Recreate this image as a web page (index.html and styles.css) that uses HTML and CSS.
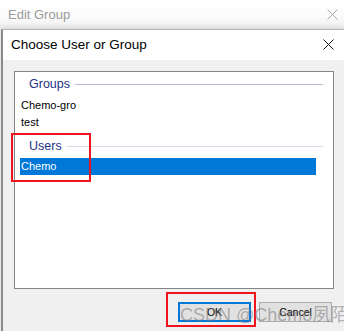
FILE: index.html
```html
<!DOCTYPE html>
<html lang="en">
<head>
  <meta charset="UTF-8" />
  <title>Edit Group</title>
  <link rel="stylesheet" href="styles.css">
</head>
<body>
  <div class="window">
    <!-- outer window title (inactive) -->
    <div class="outer-title">
      <span>Edit Group</span>
      <svg class="close faded" width="11" height="11" viewBox="0 0 11 11">
        <path d="M0.5 0.5 L10.5 10.5 M10.5 0.5 L0.5 10.5" stroke="#a8a8a8" stroke-width="1" fill="none" />
      </svg>
    </div>

    <!-- inner dialog -->
    <div class="dialog">
      <div class="dialog-title">
        <span>Choose User or Group</span>
        <svg class="close" width="11" height="11" viewBox="0 0 11 11">
          <path d="M0.5 0.5 L10.5 10.5 M10.5 0.5 L0.5 10.5" stroke="#111" stroke-width="1" fill="none" />
        </svg>
      </div>

      <div class="dialog-body">
        <div class="listbox">
          <div class="list-header first"><span>Groups</span><i class="rule"></i></div>
          <div class="list-item first">Chemo-gro</div>
          <div class="list-item">test</div>
          <div class="list-header users"><span>Users</span><i class="rule light"></i></div>
          <div class="list-item selected">Chemo</div>
        </div>

        <div class="buttons">
          <button class="btn default">OK</button>
          <button class="btn">Cancel</button>
        </div>
      </div>
    </div>

    <!-- annotation boxes and watermark from the screenshot -->
    <div class="mark mark-users"></div>
    <div class="mark mark-ok"></div>
    <div class="watermark">CSDN @Chemo夙陌</div>
  </div>
</body>
</html>
```

FILE: styles.css
```css
body {
  margin: 0;
  background-color: #f0f0f0;
  font-family: "Liberation Sans", Arial, sans-serif;
  color: #000;
}
.window {
  position: relative;
  width: 344px;
  height: 331px;
  overflow: hidden;
  background: #f0f0f0;
}
.outer-title {
  height: 29px;
  display: flex;
  align-items: center;
  justify-content: space-between;
  padding: 0 6px 1px 8px;
  box-sizing: border-box;
  background: linear-gradient(#ffffff, #fbfbfb 60%, #ececec);
  color: #9a9a9a;
  font-size: 13px;
}
.dialog {
  margin-left: 1px;
  border-left: 2px solid #8a8a8a;
  border-top: 1px solid #b4b4b4;
  height: 302px;
  box-shadow: 0 -2px 4px rgba(0, 0, 0, 0.08);
}
.dialog-title {
  height: 30px;
  display: flex;
  align-items: center;
  justify-content: space-between;
  padding: 0 10px 1px 8px;
  box-sizing: border-box;
  background: #fff;
  font-size: 13.5px;
  color: #000;
}
.dialog-body {
  padding: 11px 11px 0 11px;
}
.listbox {
  width: 320px;
  height: 218px;
  box-sizing: border-box;
  border: 1px solid #82878c;
  background: #fff;
  padding-top: 1px;
}
.list-header {
  height: 22px;
  display: flex;
  align-items: center;
  padding: 0 10px 0 14px;
  color: #1e3287;
  font-size: 12.5px;
}
.list-header.users {
  margin-top: 4px;
}
.rule {
  flex: 1;
  height: 1px;
  margin-left: 5px;
  background: #b7bed8;
}
.rule.light {
  background: #d6dde8;
}
.list-item {
  height: 17px;
  line-height: 17px;
  margin: 0 17px 0 5px;
  padding-left: 1px;
  font-size: 11px;
}
.list-item.first {
  margin-top: 2px;
}
.list-item.selected {
  margin-top: 1px;
  background: #0078d7;
  color: #fff;
}
.buttons {
  display: flex;
  justify-content: flex-end;
  gap: 8px;
  margin-top: 13px;
  padding-right: 1px;
}
.btn {
  width: 73px;
  height: 20px;
  padding: 0;
  border: 1px solid #adadad;
  background: #e1e1e1;
  font-family: "Liberation Sans", Arial, sans-serif;
  font-size: 10.5px;
  color: #000;
}
.btn.default {
  border: 2px solid #0078d7;
}
.mark {
  position: absolute;
  border: 2px solid #f0141e;
  box-sizing: border-box;
}
.mark-users {
  left: 11px;
  top: 133px;
  width: 80px;
  height: 49px;
}
.mark-ok {
  left: 166px;
  top: 292px;
  width: 90px;
  height: 35px;
}
.watermark {
  position: absolute;
  left: 180px;
  top: 300px;
  font-family: "Liberation Sans", "Noto Sans CJK SC", sans-serif;
  font-size: 18px;
  color: rgba(120, 120, 120, 0.55);
  white-space: nowrap;
}
```
